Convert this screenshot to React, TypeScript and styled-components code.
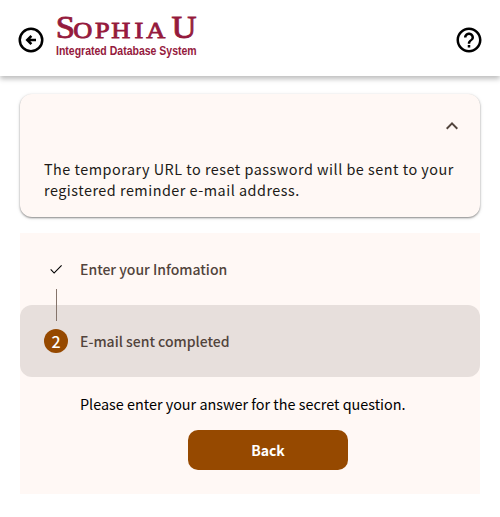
import React from "react";
import styled, { createGlobalStyle } from "styled-components";

const GlobalStyle = createGlobalStyle`
  * { box-sizing: border-box; }
  body {
    margin: 0;
    background: #fff;
    color: #000;
    font: 400 14.4px/24px "Noto Sans CJK JP", "Noto Sans", sans-serif;
  }
`;

const Header = styled.header`
  display: flex;
  align-items: center;
  height: 76px;
  padding: 0 16px;
  background: #fff;
  box-shadow: 0 3px 5px rgba(0, 0, 0, 0.26);
`;

const IconButton = styled.button`
  display: flex;
  padding: 0;
  margin-top: 4px;
  border: 0;
  background: none;
  color: #000;
`;

const Logo = styled.svg`
  display: block;
  width: 150px;
  height: 60px;
  margin: 0 auto 0 6px;
  fill: #951a3d;
`;

const LogoName = styled.text`
  font-family: "Liberation Serif", serif;
  font-size: 24px;
  stroke: #951a3d;
  stroke-width: 0.85px;
`;

const LogoTagline = styled.text`
  font-family: "Liberation Sans", sans-serif;
  font-size: 12px;
  font-weight: 700;
`;

const Main = styled.main`
  display: flex;
  flex-direction: column;
  gap: 16px;
  padding: 18px 20px 0;
`;

const Notice = styled.section`
  height: 123px;
  padding: 20px 16px 0 24px;
  border-radius: 12px;
  background: #fff8f5;
  color: #201a17;
  box-shadow: 0 1px 2px rgba(0, 0, 0, 0.42), 0 1px 4px rgba(0, 0, 0, 0.1);
`;

const NoticeToggle = styled.div`
  display: flex;
  justify-content: flex-end;
  height: 44px;
  color: #52443c;
`;

const NoticeText = styled.p`
  margin: 0;
  letter-spacing: 0.5px;
  line-height: 21px;
`;

const Panel = styled.section`
  height: 261px;
  background: #fff8f5;
`;

const Step = styled.div<{ $active?: boolean }>`
  display: flex;
  align-items: center;
  gap: 12px;
  height: 72px;
  padding: 0 24px;
  border-radius: 12px;
  background: ${(p) => (p.$active ? "#e7dfdc" : "transparent")};
  color: #52443c;
  font-size: 14px;
  font-weight: 500;
`;

const StepMark = styled.span<{ $filled?: boolean }>`
  display: flex;
  align-items: center;
  justify-content: center;
  width: 24px;
  height: 24px;
  border-radius: 50%;
  background: ${(p) => (p.$filled ? "#964900" : "transparent")};
  color: ${(p) => (p.$filled ? "#fff" : "#000")};
  font-size: 16px;
`;

const Connector = styled.div`
  position: relative;
  width: 1px;
  height: 32px;
  margin: -16px 0 -16px 36px;
  background: #85746b;
`;

const StepContent = styled.div`
  padding: 15px 24px 0 60px;
`;

const Message = styled.p`
  margin: 0;
`;

const BackButton = styled.button`
  display: block;
  width: 160px;
  height: 40px;
  margin: 14px 0 0 108px;
  padding: 0;
  border: 0;
  border-radius: 10px;
  background: #964900;
  color: #fff;
  font: 700 14px/24px "Noto Sans CJK JP", "Noto Sans", sans-serif;
`;

export default function App() {
  return (
    <>
      <GlobalStyle />
      <Header>
        <IconButton aria-label="Back">
          <svg width="30" height="30" viewBox="0 0 24 24" fill="none" stroke="currentColor">
            <circle cx="12" cy="12" r="9" strokeWidth="2" />
            <path d="M16 12H9.2M12.3 8.7 9 12l3.3 3.3" strokeWidth="2" />
          </svg>
        </IconButton>
        <Logo viewBox="0 0 150 60" role="img" aria-label="Sophia U Integrated Database System">
          <LogoName transform="scale(1.1 1)">
            <tspan x="3.3" y="29.8" fontSize="31.5">S</tspan>
            <tspan x="19.3 39 53.8 75 85.6" y="29.8">OPHIA</tspan>
            <tspan x="108.7" y="29.8" fontSize="31.5">U</tspan>
          </LogoName>
          <LogoTagline transform="translate(4 47) scale(0.877 1)">Integrated Database System</LogoTagline>
        </Logo>
        <IconButton aria-label="Help">
          <svg width="30" height="30" viewBox="0 0 24 24" fill="currentColor">
            <path d="M11 18h2v-2h-2v2zm1-16C6.48 2 2 6.48 2 12s4.48 10 10 10 10-4.48 10-10S17.52 2 12 2zm0 18c-4.41 0-8-3.59-8-8s3.59-8 8-8 8 3.59 8 8-3.59 8-8 8zm0-14c-2.21 0-4 1.79-4 4h2c0-1.1.9-2 2-2s2 .9 2 2c0 2-3 1.75-3 5h2c0-2.25 3-2.5 3-5 0-2.21-1.79-4-4-4z" />
          </svg>
        </IconButton>
      </Header>
      <Main>
        <Notice>
          <NoticeToggle>
            <svg width="24" height="24" viewBox="0 0 24 24" fill="currentColor">
              <path d="m7.4 15.4-1.4-1.4 6-6 6 6-1.4 1.4-4.6-4.6z" />
            </svg>
          </NoticeToggle>
          <NoticeText>
            The temporary URL to reset password will be sent to your
            <br />
            registered reminder e-mail address.
          </NoticeText>
        </Notice>
        <Panel>
          <Step>
            <StepMark>
              <svg width="16" height="16" viewBox="0 0 24 24" fill="currentColor">
                <path d="M9.2 16.7 4.6 12.1l-1.2 1.2L9.2 19 21 7.2 19.8 6z" />
              </svg>
            </StepMark>
            Enter your Infomation
          </Step>
          <Connector />
          <Step $active>
            <StepMark $filled>2</StepMark>
            E-mail sent completed
          </Step>
          <StepContent>
            <Message>Please enter your answer for the secret question.</Message>
            <BackButton>Back</BackButton>
          </StepContent>
        </Panel>
      </Main>
    </>
  );
}
